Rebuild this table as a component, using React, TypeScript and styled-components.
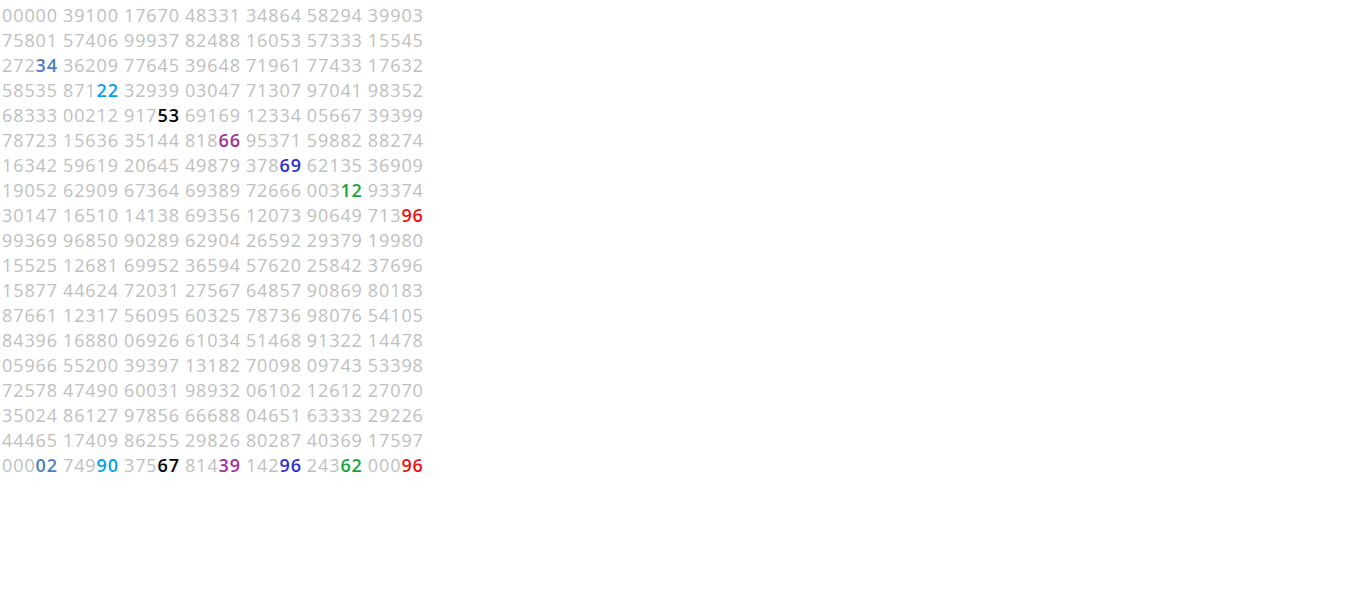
import * as React from 'react';
import styled, { createGlobalStyle } from 'styled-components';

const GlobalStyle = createGlobalStyle`
  body {
    margin: 0;
    background: #ffffff;
  }
`;

const Board = styled.div`
  padding: 3px 0 0 2px;
  font-family: 'Open Sans', 'Noto Sans', sans-serif;
  font-size: 18px;
  line-height: 25px;
  color: #c0c0c0;
  display: flex;
  flex-direction: column;
`;

const Row = styled.div`
  display: flex;
  gap: 5px;
  white-space: nowrap;
`;

const Group = styled.span`
  letter-spacing: 0.9px;
`;

const Hit = styled.span<{ $color: string }>`
  color: ${(p) => p.$color};
  font-weight: 600;
`;

const rows: string[][] = [
  ['00000', '39100', '17670', '48331', '34864', '58294', '39903'],
  ['75801', '57406', '99937', '82488', '16053', '57333', '15545'],
  ['27234', '36209', '77645', '39648', '71961', '77433', '17632'],
  ['58535', '87122', '32939', '03047', '71307', '97041', '98352'],
  ['68333', '00212', '91753', '69169', '12334', '05667', '39399'],
  ['78723', '15636', '35144', '81866', '95371', '59882', '88274'],
  ['16342', '59619', '20645', '49879', '37869', '62135', '36909'],
  ['19052', '62909', '67364', '69389', '72666', '00312', '93374'],
  ['30147', '16510', '14138', '69356', '12073', '90649', '71396'],
  ['99369', '96850', '90289', '62904', '26592', '29379', '19980'],
  ['15525', '12681', '69952', '36594', '57620', '25842', '37696'],
  ['15877', '44624', '72031', '27567', '64857', '90869', '80183'],
  ['87661', '12317', '56095', '60325', '78736', '98076', '54105'],
  ['84396', '16880', '06926', '61034', '51468', '91322', '14478'],
  ['05966', '55200', '39397', '13182', '70098', '09743', '53398'],
  ['72578', '47490', '60031', '98932', '06102', '12612', '27070'],
  ['35024', '86127', '97856', '66688', '04651', '63333', '29226'],
  ['44465', '17409', '86255', '29826', '80287', '40369', '17597'],
  ['00002', '74990', '37567', '81439', '14296', '24362', '00096'],
];

const palette = ['#4a7ec4', '#00a2e8', '#000000', '#a3309a', '#2f2fd0', '#14a83c', '#ee1111'];

// which cell in which row has its last two digits highlighted
const hits: Record<number, number[]> = {
  2: [0], 3: [1], 4: [2], 5: [3], 6: [4], 7: [5], 8: [6],
  18: [0, 1, 2, 3, 4, 5, 6],
};

export default function App() {
  return (
    <>
      <GlobalStyle />
      <Board>
        {rows.map((row, r) => (
          <Row key={r}>
            {row.map((g, c) =>
              hits[r]?.includes(c) ? (
                <Group key={c}>
                  {g.slice(0, 3)}
                  <Hit $color={palette[c]}>{g.slice(3)}</Hit>
                </Group>
              ) : (
                <Group key={c}>{g}</Group>
              )
            )}
          </Row>
        ))}
      </Board>
    </>
  );
}
